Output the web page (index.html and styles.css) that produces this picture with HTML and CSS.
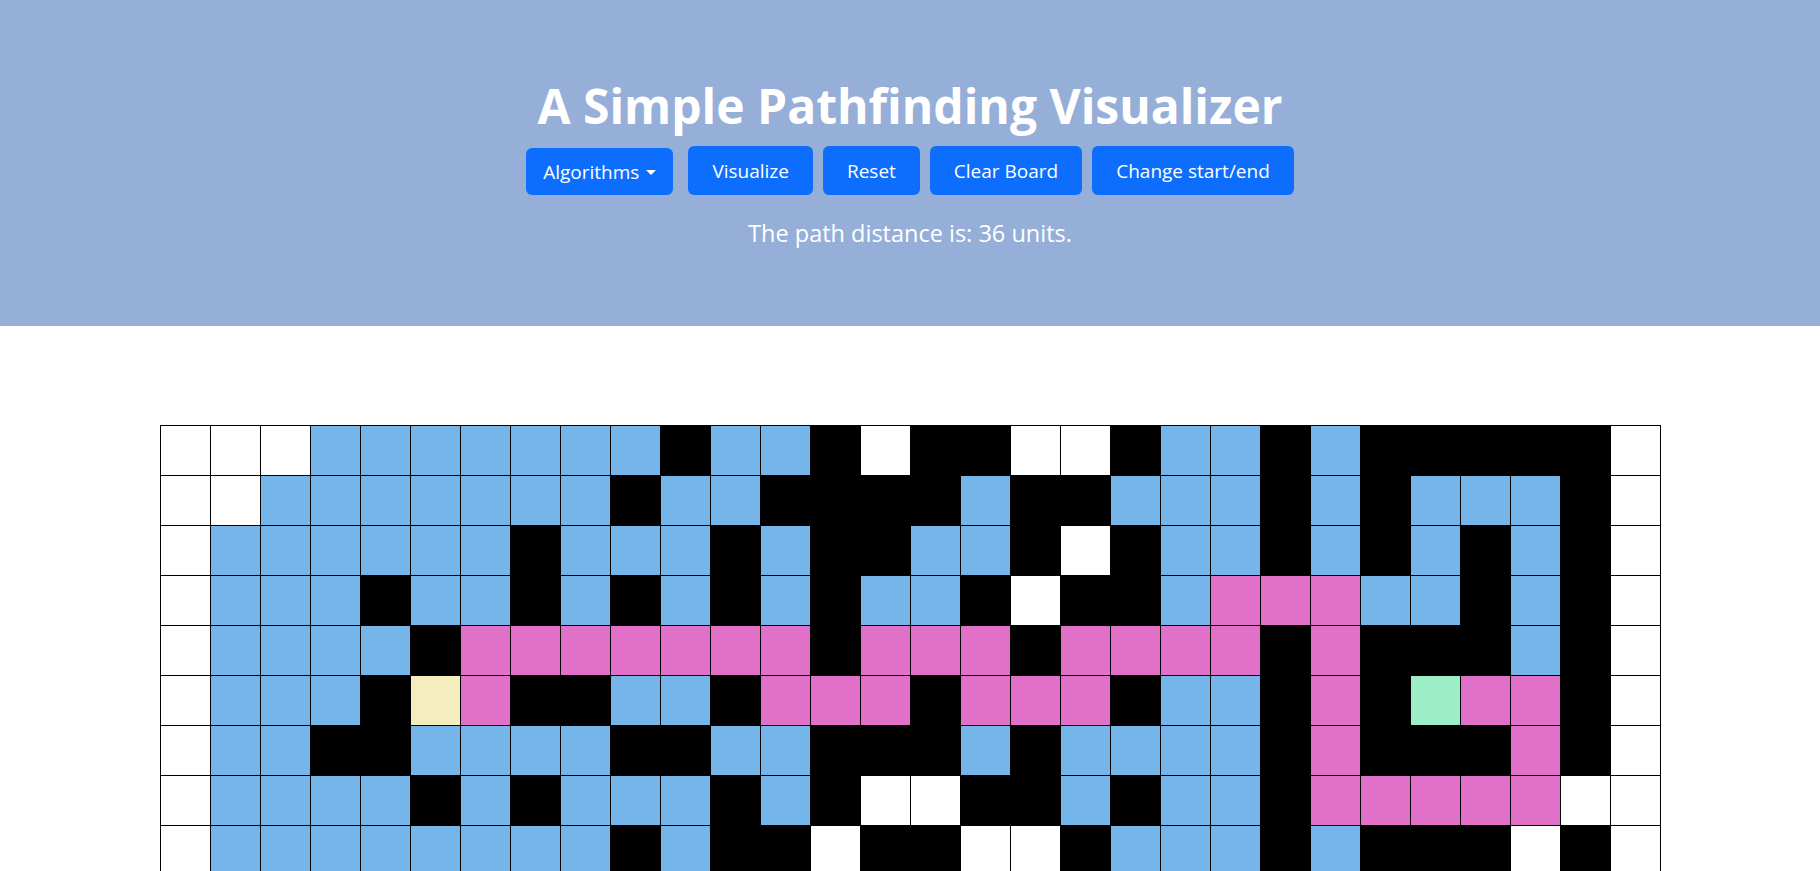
FILE: index.html
```html
<!DOCTYPE html>
<html lang="en">
<head>
<meta charset="utf-8">
<title>A Simple Pathfinding Visualizer</title>
<link rel="stylesheet" href="styles.css">
</head>
<body>
<header class="hero">
  <h1 class="title">A Simple Pathfinding Visualizer</h1>
  <div class="toolbar">
    <div class="dropdown"><button class="btn btn-drop">Algorithms</button></div>
    <button class="btn">Visualize</button>
    <button class="btn">Reset</button>
    <button class="btn">Clear Board</button>
    <button class="btn">Change start/end</button>
  </div>
  <p class="distance">The path distance is: 36 units.</p>
</header>
<main class="board-wrap">
  <div class="board">
    <span class="w"></span><span class="w"></span><span class="w"></span><span class="v"></span><span class="v"></span><span class="v"></span><span class="v"></span><span class="v"></span><span class="v"></span><span class="v"></span><span class="k"></span><span class="v"></span><span class="v"></span><span class="k"></span><span class="w"></span><span class="k"></span><span class="k"></span><span class="w"></span><span class="w"></span><span class="k"></span><span class="v"></span><span class="v"></span><span class="k"></span><span class="v"></span><span class="k"></span><span class="k"></span><span class="k"></span><span class="k"></span><span class="k"></span><span class="w"></span>
    <span class="w"></span><span class="w"></span><span class="v"></span><span class="v"></span><span class="v"></span><span class="v"></span><span class="v"></span><span class="v"></span><span class="v"></span><span class="k"></span><span class="v"></span><span class="v"></span><span class="k"></span><span class="k"></span><span class="k"></span><span class="k"></span><span class="v"></span><span class="k"></span><span class="k"></span><span class="v"></span><span class="v"></span><span class="v"></span><span class="k"></span><span class="v"></span><span class="k"></span><span class="v"></span><span class="v"></span><span class="v"></span><span class="k"></span><span class="w"></span>
    <span class="w"></span><span class="v"></span><span class="v"></span><span class="v"></span><span class="v"></span><span class="v"></span><span class="v"></span><span class="k"></span><span class="v"></span><span class="v"></span><span class="v"></span><span class="k"></span><span class="v"></span><span class="k"></span><span class="k"></span><span class="v"></span><span class="v"></span><span class="k"></span><span class="w"></span><span class="k"></span><span class="v"></span><span class="v"></span><span class="k"></span><span class="v"></span><span class="k"></span><span class="v"></span><span class="k"></span><span class="v"></span><span class="k"></span><span class="w"></span>
    <span class="w"></span><span class="v"></span><span class="v"></span><span class="v"></span><span class="k"></span><span class="v"></span><span class="v"></span><span class="k"></span><span class="v"></span><span class="k"></span><span class="v"></span><span class="k"></span><span class="v"></span><span class="k"></span><span class="v"></span><span class="v"></span><span class="k"></span><span class="w"></span><span class="k"></span><span class="k"></span><span class="v"></span><span class="p"></span><span class="p"></span><span class="p"></span><span class="v"></span><span class="v"></span><span class="k"></span><span class="v"></span><span class="k"></span><span class="w"></span>
    <span class="w"></span><span class="v"></span><span class="v"></span><span class="v"></span><span class="v"></span><span class="k"></span><span class="p"></span><span class="p"></span><span class="p"></span><span class="p"></span><span class="p"></span><span class="p"></span><span class="p"></span><span class="k"></span><span class="p"></span><span class="p"></span><span class="p"></span><span class="k"></span><span class="p"></span><span class="p"></span><span class="p"></span><span class="p"></span><span class="k"></span><span class="p"></span><span class="k"></span><span class="k"></span><span class="k"></span><span class="v"></span><span class="k"></span><span class="w"></span>
    <span class="w"></span><span class="v"></span><span class="v"></span><span class="v"></span><span class="k"></span><span class="s"></span><span class="p"></span><span class="k"></span><span class="k"></span><span class="v"></span><span class="v"></span><span class="k"></span><span class="p"></span><span class="p"></span><span class="p"></span><span class="k"></span><span class="p"></span><span class="p"></span><span class="p"></span><span class="k"></span><span class="v"></span><span class="v"></span><span class="k"></span><span class="p"></span><span class="k"></span><span class="e"></span><span class="p"></span><span class="p"></span><span class="k"></span><span class="w"></span>
    <span class="w"></span><span class="v"></span><span class="v"></span><span class="k"></span><span class="k"></span><span class="v"></span><span class="v"></span><span class="v"></span><span class="v"></span><span class="k"></span><span class="k"></span><span class="v"></span><span class="v"></span><span class="k"></span><span class="k"></span><span class="k"></span><span class="v"></span><span class="k"></span><span class="v"></span><span class="v"></span><span class="v"></span><span class="v"></span><span class="k"></span><span class="p"></span><span class="k"></span><span class="k"></span><span class="k"></span><span class="p"></span><span class="k"></span><span class="w"></span>
    <span class="w"></span><span class="v"></span><span class="v"></span><span class="v"></span><span class="v"></span><span class="k"></span><span class="v"></span><span class="k"></span><span class="v"></span><span class="v"></span><span class="v"></span><span class="k"></span><span class="v"></span><span class="k"></span><span class="w"></span><span class="w"></span><span class="k"></span><span class="k"></span><span class="v"></span><span class="k"></span><span class="v"></span><span class="v"></span><span class="k"></span><span class="p"></span><span class="p"></span><span class="p"></span><span class="p"></span><span class="p"></span><span class="w"></span><span class="w"></span>
    <span class="w"></span><span class="v"></span><span class="v"></span><span class="v"></span><span class="v"></span><span class="v"></span><span class="v"></span><span class="v"></span><span class="v"></span><span class="k"></span><span class="v"></span><span class="k"></span><span class="k"></span><span class="w"></span><span class="k"></span><span class="k"></span><span class="w"></span><span class="w"></span><span class="k"></span><span class="v"></span><span class="v"></span><span class="v"></span><span class="k"></span><span class="v"></span><span class="k"></span><span class="k"></span><span class="k"></span><span class="w"></span><span class="k"></span><span class="w"></span>
  </div>
</main>
</body>
</html>
```

FILE: styles.css
```css
html {
  overflow: hidden;
}

body {
  margin: 0;
  font-family: "Open Sans", Lato, sans-serif;
  background: #ffffff;
  color: #212529;
}

.hero {
  height: 326px;
  box-sizing: border-box;
  background: #95afd9;
  padding-top: 78px;
  display: flex;
  flex-direction: column;
  align-items: center;
  color: #ffffff;
}

.title {
  margin: 0;
  font-size: 48px;
  font-weight: 700;
  line-height: 56px;
}

.toolbar {
  margin-top: 12px;
  display: flex;
  align-items: flex-start;
  gap: 10px;
}

.dropdown {
  margin-right: 5px;
  padding-top: 2px;
}

.btn {
  height: 49px;
  padding: 2px 24px 0;
  border: none;
  border-radius: 6px;
  background: #0d6efd;
  color: #ffffff;
  font-family: "Open Sans", Lato, sans-serif;
  font-size: 19px;
  line-height: 1;
}

.btn-drop {
  height: 47px;
  padding: 1px 17px 0;
}

.btn-drop::after {
  content: "";
  display: inline-block;
  margin-left: 7px;
  vertical-align: 4px;
  border-top: 5px solid #ffffff;
  border-left: 5px solid transparent;
  border-right: 5px solid transparent;
}

.distance {
  margin: 23px 0 0;
  font-size: 23.5px;
  line-height: 30px;
}

.board-wrap {
  padding-top: 99px;
  display: flex;
  justify-content: center;
}

.board {
  display: grid;
  grid-template-columns: repeat(30, 49px);
  grid-auto-rows: 49px;
  gap: 1px;
  padding: 1px;
  background: #000000;
}

.board span {
  display: block;
}

.w { background: #ffffff; }
.v { background: #75b5ea; }
.k { background: #000000; }
.p { background: #e070c8; }
.s { background: #f4edbe; }
.e { background: #9ceec6; }
```
